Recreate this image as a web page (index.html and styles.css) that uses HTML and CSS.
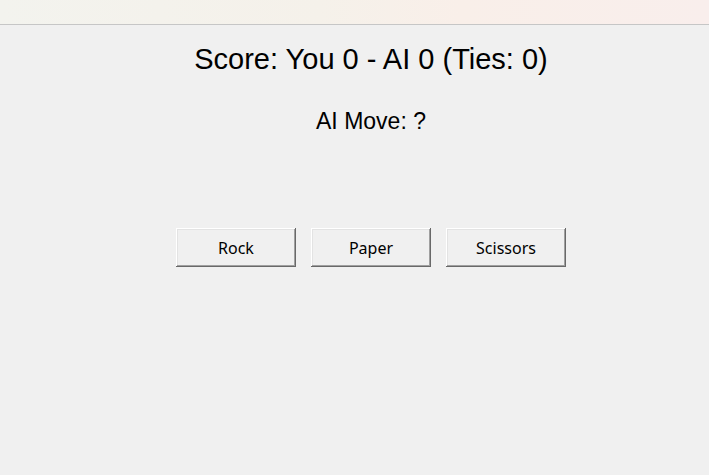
FILE: index.html
```html
<!DOCTYPE html>
<html>
<head>
<meta charset="utf-8">
<link rel="stylesheet" href="styles.css">
</head>
<body>
<div class="titlebar"></div>
<main class="app">
  <div class="score">Score: You 0 - AI 0 (Ties: 0)</div>
  <div class="ai-move">AI Move: ?</div>
  <div class="buttons">
    <button class="btn">Rock</button>
    <button class="btn">Paper</button>
    <button class="btn">Scissors</button>
  </div>
</main>
</body>
</html>
```
FILE: styles.css
```css
html, body {
  margin: 0;
  padding: 0;
  width: 709px;
  height: 475px;
  overflow: hidden;
  background: #f0f0f0;
}
.titlebar {
  height: 24px;
  border-bottom: 1px solid #c6c6c6;
  background: linear-gradient(90deg, #f3f3ee 0%, #f5f1ea 45%, #f9efe9 65%, #f9eeec 100%);
}
.app {
  width: 742px;
  display: flex;
  flex-direction: column;
  align-items: center;
  font-family: "Liberation Sans", Arial, sans-serif;
  color: #000;
}
.score {
  margin-top: 18px;
  font-size: 29px;
  line-height: 32px;
}
.ai-move {
  margin-top: 30px;
  font-size: 23px;
  line-height: 32px;
}
.buttons {
  margin-top: 91px;
  display: flex;
  gap: 15px;
}
.btn {
  width: 120px;
  height: 39px;
  padding: 0;
  margin: 0;
  border: none;
  background: #f0f0f0;
  font-family: "Noto Sans", "Open Sans", sans-serif;
  font-size: 16px;
  color: #000;
  box-shadow: inset -1px -1px #696969, inset 1px 1px #ffffff, inset -2px -2px #a0a0a0, inset 2px 2px #e3e3e3;
}
```
